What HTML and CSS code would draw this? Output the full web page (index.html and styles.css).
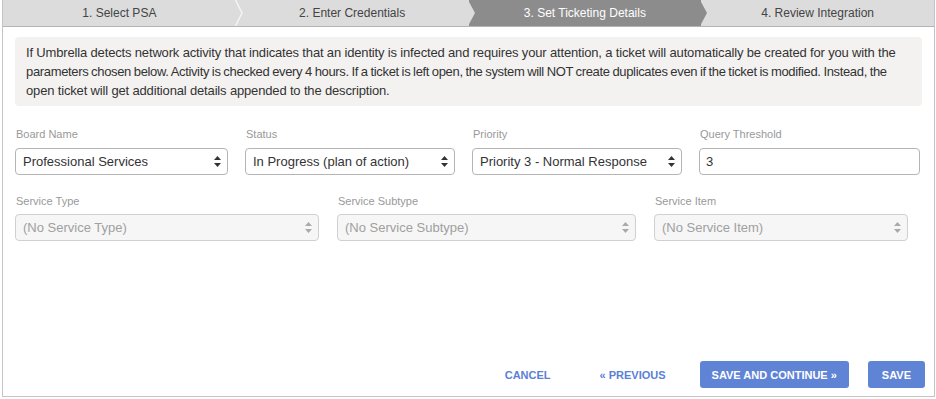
FILE: index.html
```html
<!DOCTYPE html>
<html lang="en">
<head>
    <meta charset="UTF-8">
    <title>Set Ticketing Details</title>
    <link rel="stylesheet" href="styles.css">
</head>
<body>
    <div class="wizard">
        <div class="steps">
            <div class="step">1. Select PSA
                <svg class="sep" width="8" height="26" viewBox="0 0 8 26"><polyline points="0.5,0 7,13 0.5,26" fill="none" stroke="#f4f4f4" stroke-width="1.5"/></svg>
            </div>
            <div class="step">2. Enter Credentials
                <svg class="sep" width="8" height="26" viewBox="0 0 8 26"><polygon points="0,0 7,13 0,26" fill="#dcdcdc"/></svg>
            </div>
            <div class="step active">3. Set Ticketing Details
                <svg class="sep" width="8" height="26" viewBox="0 0 8 26"><polygon points="0,0 7,13 0,26" fill="#8c8c8c"/></svg>
            </div>
            <div class="step">4. Review Integration</div>
        </div>

        <div class="content">
            <div class="info">
                If Umbrella detects network activity that indicates that an identity is infected and requires your attention, a ticket will automatically be created for you with the<br>
                <span class="tight">parameters chosen below. Activity is checked every 4 hours. If a ticket is left open, the system will NOT create duplicates even if the ticket is modified. Instead, the</span><br>
                open ticket will get additional details appended to the description.
            </div>

            <div class="row row-four">
                <div class="field">
                    <label>Board Name</label>
                    <div class="select">
                        <span>Professional Services</span>
                        <svg class="arrows" width="7" height="11" viewBox="0 0 7 11"><polygon points="3.5,0 7,4 0,4" fill="#333"/><polygon points="0,7 7,7 3.5,11" fill="#333"/></svg>
                    </div>
                </div>
                <div class="field">
                    <label>Status</label>
                    <div class="select">
                        <span>In Progress (plan of action)</span>
                        <svg class="arrows" width="7" height="11" viewBox="0 0 7 11"><polygon points="3.5,0 7,4 0,4" fill="#333"/><polygon points="0,7 7,7 3.5,11" fill="#333"/></svg>
                    </div>
                </div>
                <div class="field">
                    <label>Priority</label>
                    <div class="select">
                        <span>Priority 3 - Normal Response</span>
                        <svg class="arrows" width="7" height="11" viewBox="0 0 7 11"><polygon points="3.5,0 7,4 0,4" fill="#333"/><polygon points="0,7 7,7 3.5,11" fill="#333"/></svg>
                    </div>
                </div>
                <div class="field">
                    <label>Query Threshold</label>
                    <div class="input">3</div>
                </div>
            </div>

            <div class="row row-three">
                <div class="field">
                    <label>Service Type</label>
                    <div class="select disabled">
                        <span>(No Service Type)</span>
                        <svg class="arrows" width="7" height="11" viewBox="0 0 7 11"><polygon points="3.5,0 7,4 0,4" fill="#aaa"/><polygon points="0,7 7,7 3.5,11" fill="#aaa"/></svg>
                    </div>
                </div>
                <div class="field">
                    <label>Service Subtype</label>
                    <div class="select disabled">
                        <span>(No Service Subtype)</span>
                        <svg class="arrows" width="7" height="11" viewBox="0 0 7 11"><polygon points="3.5,0 7,4 0,4" fill="#aaa"/><polygon points="0,7 7,7 3.5,11" fill="#aaa"/></svg>
                    </div>
                </div>
                <div class="field">
                    <label>Service Item</label>
                    <div class="select disabled">
                        <span>(No Service Item)</span>
                        <svg class="arrows" width="7" height="11" viewBox="0 0 7 11"><polygon points="3.5,0 7,4 0,4" fill="#aaa"/><polygon points="0,7 7,7 3.5,11" fill="#aaa"/></svg>
                    </div>
                </div>
            </div>
        </div>

        <div class="actions">
            <button class="link">Cancel</button>
            <button class="link">&laquo; Previous</button>
            <button class="primary">Save and Continue &raquo;</button>
            <button class="primary save">Save</button>
        </div>
    </div>
</body>
</html>
```

FILE: styles.css
```css
body {
    font-family: "Liberation Sans", Arial, sans-serif;
    margin: 0;
    padding: 0;
    background-color: #ffffff;
    color: #333;
}
.wizard {
    margin: 0 1px 0 2px;
    height: 397px;
    box-sizing: border-box;
    border: 1px solid #c2c4c6;
    border-top: none;
    display: flex;
    flex-direction: column;
}
.steps {
    display: flex;
    height: 27px;
    box-sizing: border-box;
    border-bottom: 1px solid #b4b4b4;
    background-color: #dcdcdc;
}
.step {
    flex: 1;
    position: relative;
    font-size: 12px;
    line-height: 26px;
    text-align: center;
    color: #444;
}
.step.active {
    background-color: #8c8c8c;
    color: #fff;
}
.step .sep {
    position: absolute;
    top: 0;
    right: -7px;
    z-index: 1;
}
.content {
    padding: 10px 12px 0 12px;
}
.info {
    background-color: #f3f2f0;
    border-radius: 4px;
    padding: 6px 8px 6px 11px;
    font-size: 13px;
    line-height: 19px;
    letter-spacing: -0.16px;
    white-space: nowrap;
    color: #333;
}
.info .tight {
    letter-spacing: -0.34px;
    word-spacing: -0.5px;
}
.row {
    display: grid;
    column-gap: 18px;
}
.row-four {
    grid-template-columns: 213px 210px 210px 221px;
    margin-top: 21px;
    column-gap: 17px;
}
.row-three {
    grid-template-columns: 304px 299px 254px;
    margin-top: 19px;
}
.field label {
    display: block;
    font-size: 11px;
    color: #999;
    height: 14px;
    line-height: 14px;
    margin-bottom: 7px;
    padding-left: 1px;
}
.row-three .field label {
    margin-bottom: 6px;
}
.select, .input {
    height: 27px;
    box-sizing: border-box;
    border: 1px solid #b5b5b5;
    border-radius: 4px;
    background-color: #fff;
    font-size: 13px;
    color: #333;
    display: flex;
    align-items: center;
    padding: 0 6px 0 7px;
}
.select span {
    flex: 1;
}
.select.disabled {
    background-color: #f6f6f6;
    border-color: #d0d0d0;
    color: #a0a0a0;
}
.input {
    padding-left: 6px;
}
.actions {
    margin-top: auto;
    display: flex;
    justify-content: flex-end;
    align-items: center;
    gap: 19px;
    padding: 0 9px 8px 0;
}
button {
    font-family: "Liberation Sans", Arial, sans-serif;
    font-size: 11px;
    font-weight: bold;
    text-transform: uppercase;
    height: 27px;
    padding: 0 12px;
    border: none;
    border-radius: 3px;
    cursor: pointer;
}
button.link {
    background: none;
    color: #5b7fd6;
    padding: 0 15px;
}
button.primary {
    background-color: #5f84d6;
    color: #fff;
}
button.save {
    padding: 0 14px;
}
```
